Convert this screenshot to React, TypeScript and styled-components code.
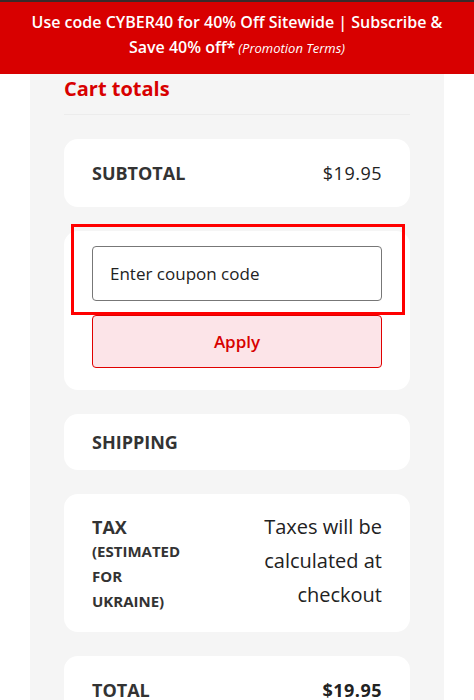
import React from "react";
import styled, { createGlobalStyle } from "styled-components";

const Global = createGlobalStyle`
  html, body { margin: 0; padding: 0; background: #ffffff; }
  body { font-family: "Open Sans", "DejaVu Sans", sans-serif; color: #333; }
  * { box-sizing: border-box; }
`;

const Banner = styled.div`
  background: #d80000;
  border-top: 2px solid #3a2a2a;
  color: #ffffff;
  text-align: center;
  font-size: 16px;
  font-weight: 600;
  line-height: 25px;
  padding: 8px 20px 13px;
`;

const Terms = styled.em`
  font-size: 13px;
  font-weight: 400;
  padding-left: 3px;
`;

const Panel = styled.section`
  background: #f5f5f5;
  margin: 0 30px;
  padding: 0 34px 30px;
`;

const Heading = styled.h2`
  margin: 0;
  color: #d80000;
  font-size: 20px;
  font-weight: 700;
  line-height: 30px;
  padding: 0 0 10px;
  border-bottom: 1px solid #ececec;
`;

const Cards = styled.div`
  display: flex;
  flex-direction: column;
  gap: 24px;
  padding-top: 24px;
`;

const Card = styled.div<{ $pad: string }>`
  position: relative;
  background: #ffffff;
  border-radius: 14px;
  padding: ${(p) => p.$pad};
`;

const Row = styled.div<{ $align?: string }>`
  display: flex;
  justify-content: space-between;
  align-items: ${(p) => p.$align || "center"};
`;

const Label = styled.div`
  font-size: 18px;
  font-weight: 700;
  line-height: 24px;
  color: #333;
`;

const Value = styled.div<{ $bold?: boolean }>`
  font-size: 18px;
  font-weight: ${(p) => (p.$bold ? 700 : 400)};
  line-height: 26px;
  color: #222;
  letter-spacing: 0.5px;
`;

const TaxLabel = styled.div`
  width: 96px;
  font-weight: 700;
  color: #333;
`;

const TaxSub = styled.div`
  font-size: 15px;
  line-height: 25px;
`;

const TaxNote = styled.div`
  width: 135px;
  text-align: right;
  font-size: 20px;
  line-height: 34px;
  color: #222;
  margin-top: -5px;
`;

const CouponForm = styled.div`
  display: flex;
  flex-direction: column;
  gap: 14px;
`;

const Input = styled.input`
  height: 55px;
  width: 100%;
  border: 1px solid #777;
  border-radius: 4px;
  padding: 0 17px;
  font-family: inherit;
  font-size: 17px;
  color: #222;
  background: #fff;
  &::placeholder { color: #222; }
  &:focus { outline: none; }
`;

const ApplyButton = styled.button`
  height: 53px;
  width: 100%;
  border: 1px solid #e00000;
  border-radius: 4px;
  background: #fce4e8;
  color: #d80000;
  font-family: inherit;
  font-size: 17px;
  font-weight: 600;
`;

const Highlight = styled.div`
  position: absolute;
  left: 7px;
  top: -7px;
  width: 334px;
  height: 91px;
  border: 3px solid #ff0000;
  pointer-events: none;
`;

export default function App() {
  return (
    <>
      <Global />
      <Banner>
        Use code CYBER40 for 40% Off Sitewide | Subscribe &amp; Save 40% off*
        <Terms>(Promotion Terms)</Terms>
      </Banner>
      <Panel>
        <Heading>Cart totals</Heading>
        <Cards>
          <Card $pad="21px 28px">
            <Row>
              <Label>SUBTOTAL</Label>
              <Value>$19.95</Value>
            </Row>
          </Card>
          <Card $pad="15px 28px 22px">
            <CouponForm>
              <Input placeholder="Enter coupon code" />
              <ApplyButton>Apply</ApplyButton>
            </CouponForm>
            <Highlight />
          </Card>
          <Card $pad="16px 28px">
            <Label>SHIPPING</Label>
          </Card>
          <Card $pad="21px 28px 18px">
            <Row $align="flex-start">
              <TaxLabel>
                <Label>TAX</Label>
                <TaxSub>(ESTIMATED FOR UKRAINE)</TaxSub>
              </TaxLabel>
              <TaxNote>Taxes will be calculated at checkout</TaxNote>
            </Row>
          </Card>
          <Card $pad="21px 28px">
            <Row>
              <Label>TOTAL</Label>
              <Value $bold>$19.95</Value>
            </Row>
          </Card>
        </Cards>
      </Panel>
    </>
  );
}
